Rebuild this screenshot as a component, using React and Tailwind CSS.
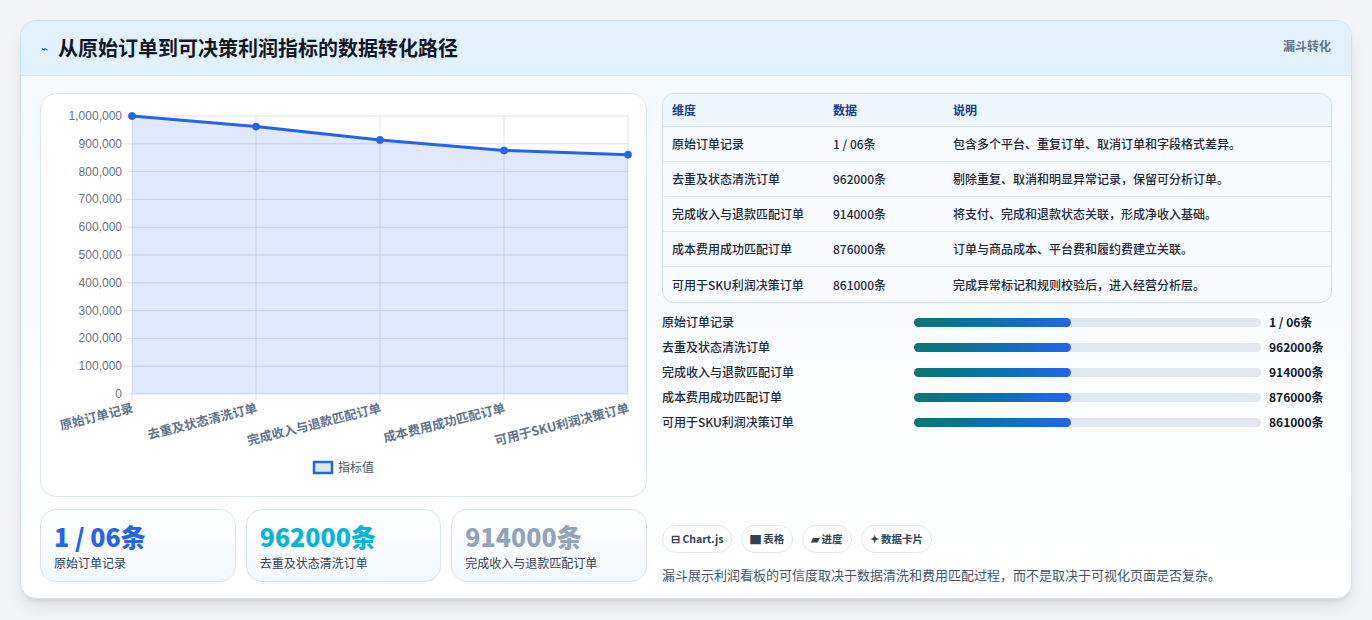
const rows = [
  ['原始订单记录', '1 / 06条', '包含多个平台、重复订单、取消订单和字段格式差异。', 1000000],
  ['去重及状态清洗订单', '962000条', '剔除重复、取消和明显异常记录，保留可分析订单。', 962000],
  ['完成收入与退款匹配订单', '914000条', '将支付、完成和退款状态关联，形成净收入基础。', 914000],
  ['成本费用成功匹配订单', '876000条', '订单与商品成本、平台费和履约费建立关联。', 876000],
  ['可用于SKU利润决策订单', '861000条', '完成异常标记和规则校验后，进入经营分析层。', 861000],
]

const font = { fontFamily: '"Noto Sans CJK SC", "Liberation Sans", sans-serif' }

function Chart() {
  const x0 = 91, x1 = 587, y0 = 22, y1 = 300
  const xs = rows.map((_, i) => x0 + (i * (x1 - x0)) / 4)
  const ys = rows.map(r => y1 - (r[3] / 1000000) * (y1 - y0))
  const ticks = [0, 1, 2, 3, 4, 5, 6, 7, 8, 9, 10]
  const line = xs.map((x, i) => `${i ? 'L' : 'M'}${x},${ys[i]}`).join(' ')
  return (
    <svg width="606" height="400" className="block" style={{ fontFamily: '"Liberation Sans", "Noto Sans CJK SC", sans-serif' }}>
      {ticks.map(t => {
        const y = y1 - (t / 10) * (y1 - y0)
        return (
          <g key={t}>
            <line x1={x0 - 6} x2={x1} y1={y} y2={y} stroke="#dde3ec" />
            <text x={x0 - 10} y={y + 4} textAnchor="end" fontSize="12" fill="#6b7280">{(t * 100000).toLocaleString('en-US')}</text>
          </g>
        )
      })}
      {xs.map((x, i) => <line key={i} x1={x} x2={x} y1={y0} y2={y1 + 6} stroke="#dde3ec" />)}
      <path d={`${line} L${x1},${y1} L${x0},${y1} Z`} fill="rgba(37,99,235,0.14)" />
      <path d={line} fill="none" stroke="#2563eb" strokeWidth="3" />
      {xs.map((x, i) => <circle key={i} cx={x} cy={ys[i]} r="3.5" fill="#2563eb" stroke="#2563eb" />)}
      {xs.map((x, i) => (
        <text key={i} transform={`translate(${x + 2},${y1 + 18}) rotate(-14)`} textAnchor="end" fontSize="12.5" fill="#64748b" fontWeight="bold" style={font}>{rows[i][0]}</text>
      ))}
      <rect x="273" y="368" width="18" height="11" fill="rgba(37,99,235,0.14)" stroke="#2563eb" strokeWidth="2.5" />
      <text x="297" y="378" fontSize="12" fill="#4b5563" style={font}>指标值</text>
    </svg>
  )
}

export default function App() {
  return (
    <div className="w-[1372px] h-[620px] bg-[#f3f4f6] pt-5 pl-5" style={font}>
      <div className="w-[1332px] h-[579px] rounded-2xl border border-[#cfe3f1] bg-gradient-to-b from-[#f3f9ff] to-white shadow-lg overflow-hidden">
        <div className="h-[55px] bg-[#e3f1fd] border-b border-[#d6e8f7] flex justify-between px-5">
          <div className="flex items-center gap-[10px]">
            <span className="text-[#2563eb] text-xs">⌁</span>
            <span className="text-[20px] font-bold text-[#111827]">从原始订单到可决策利润指标的数据转化路径</span>
          </div>
          <span className="text-xs font-bold text-[#64748b] mt-[17px]">漏斗转化</span>
        </div>
        <div className="flex gap-[15px] px-[19px] pt-[17px]">
          <div className="w-[607px] flex flex-col gap-3">
            <div className="h-[404px] rounded-2xl border border-[#dbe7f3] bg-white">
              <Chart />
            </div>
            <div className="grid grid-cols-3 gap-[10px]">
              {rows.slice(0, 3).map((r, i) => (
                <div key={i} className="h-[73px] rounded-2xl border border-[#d6e6f3] bg-gradient-to-b from-white to-[#f3f9ff] px-[13px] pt-[10px]">
                  <div className={`text-[25px] font-extrabold leading-[32px] ${i === 0 ? 'text-[#2563eb]' : i === 1 ? 'text-[#06b6d4]' : 'text-[#94a3b8]'}`}>{r[1]}</div>
                  <div className="text-xs text-[#374151] mt-[3px]">{r[0]}</div>
                </div>
              ))}
            </div>
          </div>
          <div className="w-[672px] flex flex-col">
            <div className="rounded-xl border border-[#d5dfe9] overflow-hidden bg-[#f8fbff] text-xs font-medium">
              <div className="flex h-[33px] items-center bg-[#eef6ff] border-b border-[#d5dfe9] text-[#1e3a8a] font-bold">
                <div className="w-[170px] pl-[9px]">维度</div><div className="w-[120px]">数据</div><div>说明</div>
              </div>
              {rows.map((r, i) => (
                <div key={i} className={`flex h-[35px] items-center text-[#1f2937] ${i < 4 ? 'border-b border-[#e3e9f0]' : ''}`}>
                  <div className="w-[170px] pl-[9px]">{r[0]}</div><div className="w-[120px]">{r[1]}</div><div>{r[2]}</div>
                </div>
              ))}
            </div>
            <div className="mt-[11px] flex flex-col gap-[9px] text-xs font-medium">
              {rows.map((r, i) => (
                <div key={i} className="flex items-center h-[16px]">
                  <div className="w-[252px] text-[#1f2937]">{r[0]}</div>
                  <div className="w-[347px] h-[9px] rounded-full bg-[#e2e8f0]">
                    <div className="w-[157px] h-full rounded-full bg-gradient-to-r from-[#0f766e] to-[#2563eb]" />
                  </div>
                  <div className="ml-2 font-bold text-[#111827]">{r[1]}</div>
                </div>
              ))}
            </div>
            <div className="mt-[95px] flex gap-[9px]">
              {['⊟ Chart.js', '▇ 表格', '▰ 进度', '✦ 数据卡片'].map(c => (
                <span key={c} className="h-[28px] px-[8px] flex items-center rounded-full border border-[#e2e8f0] bg-white text-[10.5px] font-bold text-[#334155]">{c}</span>
              ))}
            </div>
            <div className="mt-[12px] text-[13px] text-[#475569]">漏斗展示利润看板的可信度取决于数据清洗和费用匹配过程，而不是取决于可视化页面是否复杂。</div>
          </div>
        </div>
      </div>
    </div>
  )
}
